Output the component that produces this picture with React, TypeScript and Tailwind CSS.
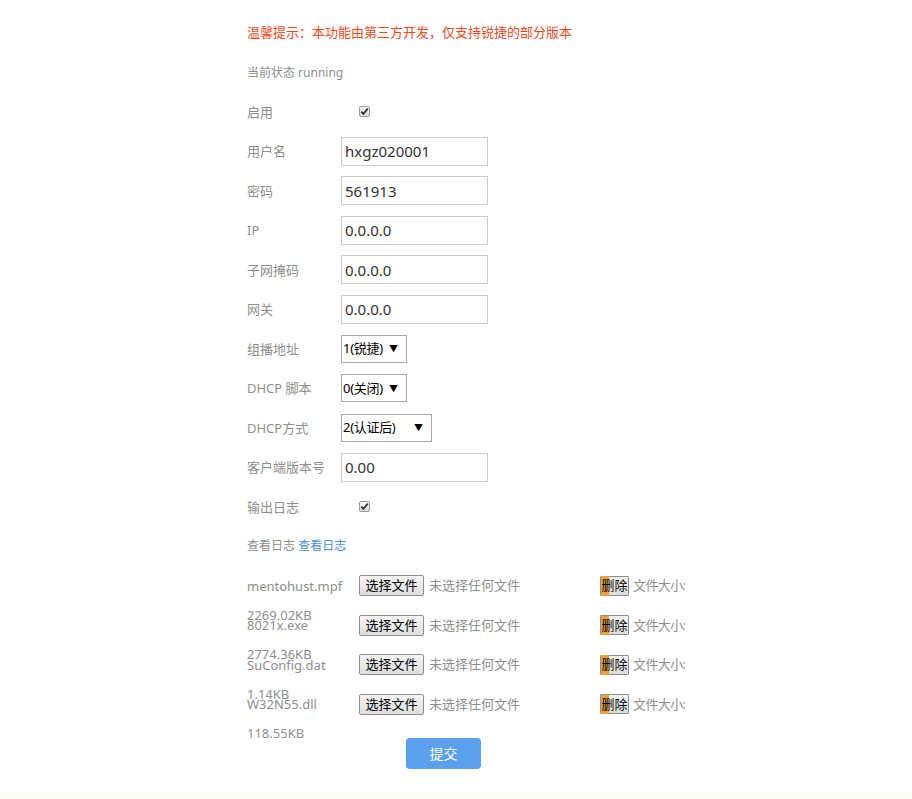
import React from "react";

const font = { fontFamily: '"Noto Sans", "Noto Sans CJK SC", sans-serif' };

function Check() {
  return (
    <span className="ml-[18px] inline-flex h-[11px] w-[11px] items-center justify-center rounded-[2px] border border-[#9a9a9a] bg-gradient-to-b from-[#f4f4f4] to-[#dcdcdc]">
      <svg width="9" height="9" viewBox="0 0 9 9">
        <path d="M1.3 4.6 L3.4 6.9 L7.8 1.6" fill="none" stroke="#333" strokeWidth="1.7" />
      </svg>
    </span>
  );
}

function Row({ children }: { children: React.ReactNode }) {
  return <div className="flex h-[39.5px] items-center">{children}</div>;
}

function Label({ children }: { children: React.ReactNode }) {
  return <div className="w-[94px] shrink-0 text-[13px] leading-[18px] text-[#8e8e8e]">{children}</div>;
}

function TextBox({ value }: { value: string }) {
  return (
    <div className="flex h-[29px] w-[147px] items-center border border-[#cccccc] bg-white pl-[3px] text-[15px] text-[#333]">
      {value}
    </div>
  );
}

function Select({ value, w }: { value: string; w: string }) {
  return (
    <div className={`flex h-[28px] ${w} items-center justify-between border border-[#a9a9a9] bg-white pl-[1px] pr-[8px] text-[13px] text-black`}>
      <span className="tracking-[-0.3px]">{value}</span>
      <span className="text-[9px]">▼</span>
    </div>
  );
}

function FileRow({ name, size }: { name: string; size: string }) {
  return (
    <div className="relative flex h-[39.5px] items-center">
      <div className="relative w-[112px] shrink-0 text-[13px] leading-[18px] text-[#8e8e8e]">
        <div>{name}</div>
        <div className="absolute left-0 top-[29px] whitespace-nowrap">{size}</div>
      </div>
      <div className="flex h-[21px] w-[65px] items-center justify-center rounded-[2px] border border-[#8f8f8f] bg-gradient-to-b from-[#f6f6f6] to-[#dddddd] text-[13px] text-black">
        选择文件
      </div>
      <div className="ml-[5px] w-[171px] text-[13px] text-[#8e8e8e]">未选择任何文件</div>
      <div className="flex h-[20px] w-[29px] items-center justify-center rounded-[1px] border border-[#8f8f8f] bg-gradient-to-b from-[#f3f3f3] to-[#dcdcdc] text-[13px] text-black">
        <span className="bg-[linear-gradient(90deg,#e9a23b_0%,#e9a23b_55%,transparent_55%)]">删</span>
        <span>除</span>
      </div>
      <div className="ml-[4px] w-[52px] overflow-hidden whitespace-nowrap text-[13px] tracking-[-0.6px] text-[#8e8e8e]">文件大小:</div>
    </div>
  );
}

export default function App() {
  return (
    <div className="relative flex h-[799px] w-full flex-col bg-white" style={font}>
      <div className="flex-1 pl-[247px] pt-[13px]">
        <Row>
          <div className="text-[13px] text-[#ee4a1a]">温馨提示：本功能由第三方开发，仅支持锐捷的部分版本</div>
        </Row>
        <Row>
          <div className="pt-[2px] text-[12px] text-[#8e8e8e]">当前状态 running</div>
        </Row>
        <Row>
          <Label>启用</Label>
          <Check />
        </Row>
        <Row>
          <Label>用户名</Label>
          <TextBox value="hxgz020001" />
        </Row>
        <Row>
          <Label>密码</Label>
          <TextBox value="561913" />
        </Row>
        <Row>
          <Label>IP</Label>
          <TextBox value="0.0.0.0" />
        </Row>
        <Row>
          <Label>子网掩码</Label>
          <TextBox value="0.0.0.0" />
        </Row>
        <Row>
          <Label>网关</Label>
          <TextBox value="0.0.0.0" />
        </Row>
        <Row>
          <Label>组播地址</Label>
          <Select value="1(锐捷)" w="w-[66px]" />
        </Row>
        <Row>
          <Label>DHCP 脚本</Label>
          <Select value="0(关闭)" w="w-[66px]" />
        </Row>
        <Row>
          <Label>DHCP方式</Label>
          <Select value="2(认证后)" w="w-[91px]" />
        </Row>
        <Row>
          <Label>客户端版本号</Label>
          <TextBox value="0.00" />
        </Row>
        <Row>
          <Label>输出日志</Label>
          <Check />
        </Row>
        <Row>
          <div className="text-[12px] text-[#8e8e8e]">
            查看日志 <span className="text-[#4a8fdd]">查看日志</span>
          </div>
        </Row>
        <FileRow name="mentohust.mpf" size="2269.02KB" />
        <FileRow name="8021x.exe" size="2774.36KB" />
        <FileRow name="SuConfig.dat" size="1.14KB" />
        <FileRow name="W32N55.dll" size="118.55KB" />
        <div className="ml-[159px] mt-[14px] flex h-[31px] w-[75px] items-center justify-center rounded-[4px] bg-[#5aa0ec] text-[14px] text-white">
          提交
        </div>
      </div>
      <div className="h-[6px] w-full bg-[#fcfcf3]" />
    </div>
  );
}
